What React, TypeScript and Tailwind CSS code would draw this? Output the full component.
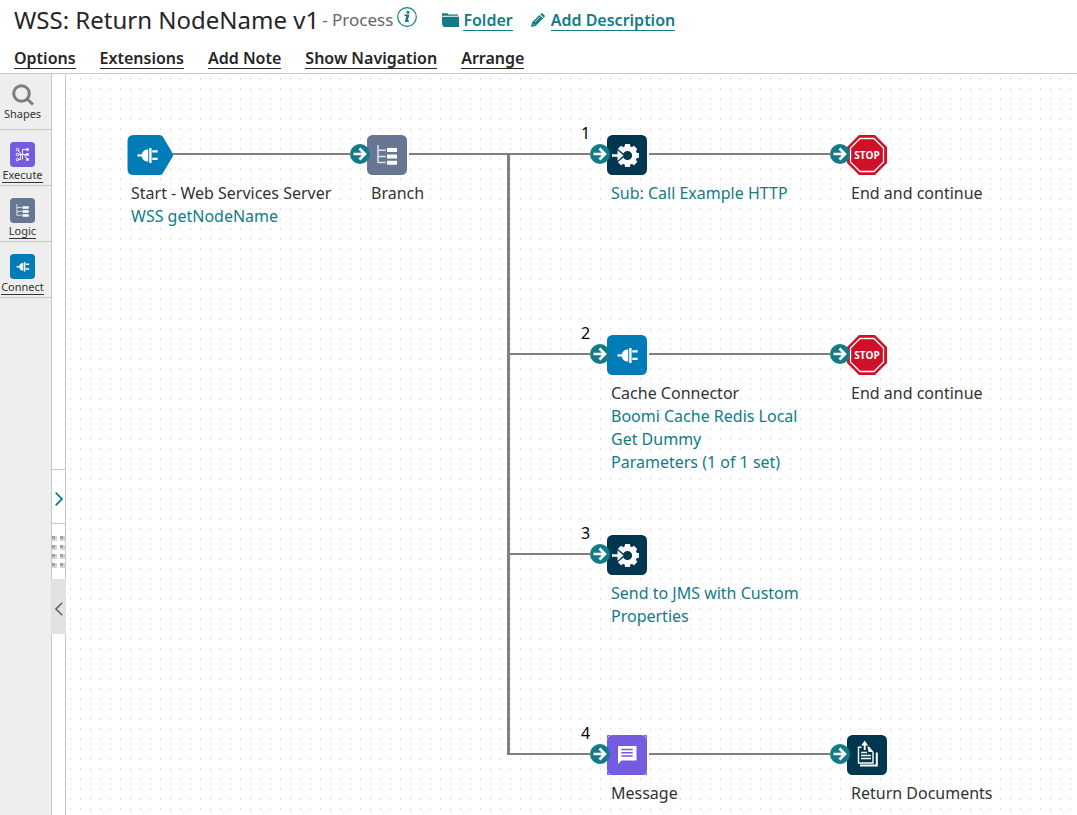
import React from "react";

type Kind = "start" | "branch" | "process" | "connector" | "stop" | "message" | "return";

interface FlowNode {
  kind: Kind;
  x: number;
  y: number;
  title?: string;
  links?: string[];
  order?: number;
}

const nodes: FlowNode[] = [
  { kind: "start", x: 61, y: 61, title: "Start - Web Services Server", links: ["WSS getNodeName"] },
  { kind: "branch", x: 301, y: 61, title: "Branch" },
  { kind: "process", x: 541, y: 61, links: ["Sub: Call Example HTTP"], order: 1 },
  { kind: "stop", x: 781, y: 61, title: "End and continue" },
  {
    kind: "connector",
    x: 541,
    y: 261,
    title: "Cache Connector",
    links: ["Boomi Cache Redis Local", "Get Dummy", "Parameters (1 of 1 set)"],
    order: 2,
  },
  { kind: "stop", x: 781, y: 261, title: "End and continue" },
  { kind: "process", x: 541, y: 461, links: ["Send to JMS with Custom Properties"], order: 3 },
  { kind: "message", x: 541, y: 661, title: "Message", order: 4 },
  { kind: "return", x: 781, y: 661, title: "Return Documents" },
];

const menu = ["Options", "Extensions", "Add Note", "Show Navigation", "Arrange"];

function Plug() {
  return (
    <g fill="#fff">
      <path d="M10.500 19.300h4.500v2.200h-4.500z" />
      <path d="M21.200 14.500v12c-3.600 0-6-2-6.400-5v-2c.4-3 2.800-5 6.400-5z" />
      <path d="M22.200 13h2.400v15h-2.400z" />
      <path d="M25.300 15.200h5.400v2.400h-5.400zM25.300 22.700h5.400v2.400h-5.400z" />
    </g>
  );
}

function Tree() {
  return (
    <g fill="#fff">
      <path d="M11 10v18M11 15.200h7.700M11 21.500h7.700M11 27.500h7.700" stroke="#dfe4ec" strokeWidth="1.500" fill="none" />
      <path d="M20 13h10v4H20zM20 19.500h10v4H20zM20 25.800h10v4H20z" />
    </g>
  );
}

function Gear() {
  const teeth = [0, 45, 90, 135, 225, 315, 180];
  return (
    <g>
      {teeth.map((a) => (
        <path key={a} d="M18.200 9h4.600l1.200 5h-7z" fill="#fff" transform={`rotate(${a} 20.500 20.500)`} />
      ))}
      <circle cx="20.500" cy="20.500" r="7" fill="none" stroke="#fff" strokeWidth="4.800" />
      <path d="M3 17.200h7v-4l9 7.300-9 7.300v-4H3z" fill="#003650" />
      <path d="M5 19.200h5.500v-4l6 5.300-6 5.300v-4H5z" fill="#fff" />
    </g>
  );
}

function Octagon() {
  return (
    <g>
      <path d="M12 0h16l12 12v16L28 40H12L0 28V12z" fill="#d01027" />
      <path d="M13 3.500h14L36.500 13v14L27 36.500H13L3.500 27V13z" fill="none" stroke="#fff" strokeWidth="1.300" />
      <text
        x="20"
        y="23.500"
        textAnchor="middle"
        fill="#fff"
        fontSize="10"
        fontWeight="700"
        fontFamily="'Open Sans', 'Noto Sans', sans-serif"
      >
        STOP
      </text>
    </g>
  );
}

function Pages() {
  return (
    <g fill="none" stroke="#fff" strokeWidth="1.400">
      <path d="M14.500 12.300h-3V28H26V17" />
      <path d="M29.800 17.500v13H13" strokeWidth="2" />
      <path d="M20.500 11.500h1.500l4.700 5.500h-5.200z" fill="#fff" stroke="none" />
      <path d="M17.700 15V9" strokeWidth="1.800" />
      <path d="M14.300 10.500l3.400-5 3.400 5z" fill="#fff" stroke="none" />
      <path d="M14 17.500h6M14 20.500h10M14 23.500h10" strokeWidth="1.300" />
    </g>
  );
}

function Bubble() {
  return (
    <g>
      <path d="M11 11h18.500v14.500H14.500L11 29z" fill="#fff" />
      <path d="M14.300 14.500h11.400M14.300 17.700h11.400M14.300 21h11.400" stroke="#755be0" strokeWidth="1.500" />
    </g>
  );
}

function Routes() {
  return (
    <g fill="none" stroke="#fff" strokeWidth="1.500">
      <path d="M13 13l4 6M14 20h6M13 28h4v-8M20 20v-8h6M20 20v8M20 20h3l4 7M23 20h4" />
      <circle cx="12" cy="12" r="2" />
      <circle cx="12" cy="20" r="2" />
      <circle cx="12" cy="28" r="2" />
      <path d="M26 10h4v4h-4zM26 18h4v4h-4zM26 26h4v4h-4z" fill="#fff" stroke="none" />
    </g>
  );
}

const tileFill = {
  branch: "#667693",
  process: "#003650",
  connector: "#007db8",
  message: "#755be0",
  return: "#003650",
};

function Glyph({ kind }: { kind: Kind }) {
  if (kind === "start") {
    return (
      <svg className="block h-10 w-[46px]" viewBox="0 0 46 40" aria-hidden="true">
        <path
          d="M6.500 0h26q2 0 3.200 1.500L45.500 18q1 2 0 4L35.700 38.500Q34.500 40 32.500 40h-26q-6 0-6-6V6q0-6 6-6z"
          fill="#007db8"
        />
        <Plug />
      </svg>
    );
  }
  if (kind === "stop") {
    return (
      <svg className="block size-10" viewBox="0 0 40 40" aria-label="Stop">
        <Octagon />
      </svg>
    );
  }
  return (
    <svg className="block size-10" viewBox="0 0 40 40" aria-hidden="true">
      <rect width="40" height="40" rx="5.500" fill={tileFill[kind]} />
      {kind === "message" && (
        <path
          d="M.5 3V.5H3M37 .5h2.500V3M39.500 37v2.500H37M3 39.500H.5V37"
          stroke="#1490ff"
          fill="none"
        />
      )}
      {kind === "branch" && <Tree />}
      {kind === "process" && <Gear />}
      {kind === "connector" && <Plug />}
      {kind === "message" && <Bubble />}
      {kind === "return" && <Pages />}
    </svg>
  );
}

function Port() {
  return (
    <svg className="absolute top-[9px] -left-[17px] size-5" viewBox="0 0 20 20" aria-hidden="true">
      <circle cx="10" cy="10" r="10" fill="#127b87" />
      <path d="M3.500 10h11M9.500 4.500l5.500 5.500-5.500 5.500" fill="none" stroke="#fff" strokeWidth="2.600" />
    </svg>
  );
}

function NodeView({ node }: { node: FlowNode }) {
  return (
    <div className="absolute w-60" style={{ left: node.x, top: node.y }}>
      <Glyph kind={node.kind} />
      {node.kind !== "start" && <Port />}
      {node.order && (
        <span className="absolute -top-[13px] -left-[26px] leading-[23px] text-black">{node.order}</span>
      )}
      <div className="mt-[7px] ml-1 flex max-w-52 flex-col items-start leading-[23px]">
        {node.title && <span>{node.title}</span>}
        {node.links?.map((l) => (
          <a key={l} href="#" className="text-[#127b87]">
            {l}
          </a>
        ))}
      </div>
    </div>
  );
}

function PaletteItem({ label, fill, children }: { label: string; fill: string; children: React.ReactNode }) {
  return (
    <button className="flex h-14 w-full flex-col items-center border-b border-[#c8c8c8] pt-3 pr-[6px]">
      <svg className="block size-[25px]" viewBox="0 0 40 40" aria-hidden="true">
        <rect width="40" height="40" rx="6" fill={fill} />
        {children}
      </svg>
      <span className="border-b border-[#333] text-[11px] leading-[15px]">{label}</span>
    </button>
  );
}

export default function App() {
  return (
    <div className="flex min-h-screen flex-col bg-white font-['Noto_Sans','Open_Sans',sans-serif] text-base text-[#333]">
      <header className="border-b border-[#c8c8c8] pl-[14px]">
        <div className="flex h-10 items-center">
          <h1 className="text-2xl text-[#262626]">WSS: Return NodeName v1</h1>
          <span className="ml-[3px] text-[17px] text-[#666]">- Process</span>
          <button aria-label="Information" className="mb-1.5 ml-1">
            <svg className="block size-5" viewBox="0 0 20 20">
              <circle cx="10" cy="10" r="9.300" fill="none" stroke="#127b87" strokeWidth="1.200" />
              <circle cx="11" cy="5.300" r="1.500" fill="#127b87" />
              <path d="M7.500 8.300h3.800L9.800 14h2.200" fill="none" stroke="#127b87" strokeWidth="1.600" />
              <path d="M9.300 8.500h2.400l-1.500 6.500H7.900z" fill="#127b87" />
            </svg>
          </button>
          <svg className="ml-[25px] h-4 w-[17px]" viewBox="0 0 17 16" aria-hidden="true">
            <path d="M0 2.500V1.200h5.500l1.300 1.300H16v1.200H0z" fill="#127b87" />
            <path d="M0 4.700h17V15H1.500L0 12z" fill="#127b87" />
          </svg>
          <a href="#" className="ml-1 border-b border-[#127b87] font-semibold leading-5 text-[#127b87]">
            Folder
          </a>
          <svg className="ml-[18px] size-[14px]" viewBox="0 0 14 14" aria-hidden="true">
            <path d="M0 14l1-4.500 7.500-7.500 3.500 3.500L4.500 13z" fill="#127b87" />
            <path d="M9.300 1.300L10.200.4q.7-.7 1.400 0l2 2q.7.7 0 1.400l-.9.9z" fill="#127b87" />
            <path d="M2 10.500l1.500 1.500M4 9l5-5" stroke="#fff" strokeWidth=".7" />
          </svg>
          <a href="#" className="ml-[6px] border-b border-[#127b87] font-semibold leading-5 text-[#127b87]">
            Add Description
          </a>
        </div>
        <nav className="flex h-[33px] items-start gap-6 pt-2">
          {menu.map((m) => (
            <button key={m} className="border-b border-[#262626] font-semibold leading-5 text-[#262626]">
              {m}
            </button>
          ))}
        </nav>
      </header>
      <div className="flex flex-1">
        <aside className="w-[52px] shrink-0 border-r border-[#c8c8c8] bg-[#eee]">
          <button className="flex h-14 w-full flex-col items-center border-b border-[#c8c8c8] pt-2.5 pr-[6px]">
            <svg className="block size-[22px]" viewBox="0 0 22 22" aria-hidden="true">
              <circle cx="9.500" cy="9.500" r="7.800" fill="none" stroke="#7d7d7d" strokeWidth="3" />
              <path d="M15 15l6 5.500" stroke="#7d7d7d" strokeWidth="3" />
            </svg>
            <span className="text-[11px] leading-[15px]">Shapes</span>
          </button>
          <PaletteItem label="Execute" fill="#755be0">
            <Routes />
          </PaletteItem>
          <PaletteItem label="Logic" fill="#667693">
            <Tree />
          </PaletteItem>
          <PaletteItem label="Connect" fill="#007db8">
            <Plug />
          </PaletteItem>
        </aside>
        <div className="flex w-[14px] shrink-0 flex-col border-r border-[#c8c8c8] pt-[395px]">
          <button
            aria-label="Expand panel"
            className="flex h-[55px] items-center justify-center border-y border-[#c8c8c8] pt-1"
          >
            <svg className="h-[14px] w-2" viewBox="0 0 8 14">
              <path d="M.7.7L7 7 .7 13.300" fill="none" stroke="#127b87" strokeWidth="1.800" />
            </svg>
          </button>
          <div className="grid h-[55px] grid-cols-[5px_5px] content-center justify-between gap-y-1">
            {Array.from({ length: 8 }, (_, i) => (
              <span key={i} className="size-[5px] border-r-2 border-b-2 border-[#d4d4d4] bg-[#a0a0a0]" />
            ))}
          </div>
          <button
            aria-label="Collapse panel"
            className="-mr-px -ml-px flex h-[55px] items-center justify-center bg-[#e2e2e2] pt-1"
          >
            <svg className="h-[14px] w-2" viewBox="0 0 8 14">
              <path d="M7.300.7L1 7l6.300 6.300" fill="none" stroke="#666" strokeWidth="1.600" />
            </svg>
          </button>
        </div>
        <main className="relative flex-1 overflow-hidden bg-[linear-gradient(#fff_8px,transparent_8px),linear-gradient(90deg,#dedede_1px,transparent_1px)] bg-size-[10px_10px] bg-position-[4px_-4px]">
          <svg className="absolute top-0 left-0 h-[741px] w-[1000px]" viewBox="0 0 1000 741" aria-hidden="true">
            <path
              d="M107 80h177M343 80h181M583 80h181M442 280h82M583 280h181M442 480h82M442 680h82M583 680h181"
              stroke="#7f7f7f"
              strokeWidth="2"
            />
            <path d="M442.500 80v601" stroke="#7f7f7f" strokeWidth="3" />
          </svg>
          {nodes.map((n) => (
            <NodeView key={`${n.x}-${n.y}`} node={n} />
          ))}
        </main>
      </div>
    </div>
  );
}
